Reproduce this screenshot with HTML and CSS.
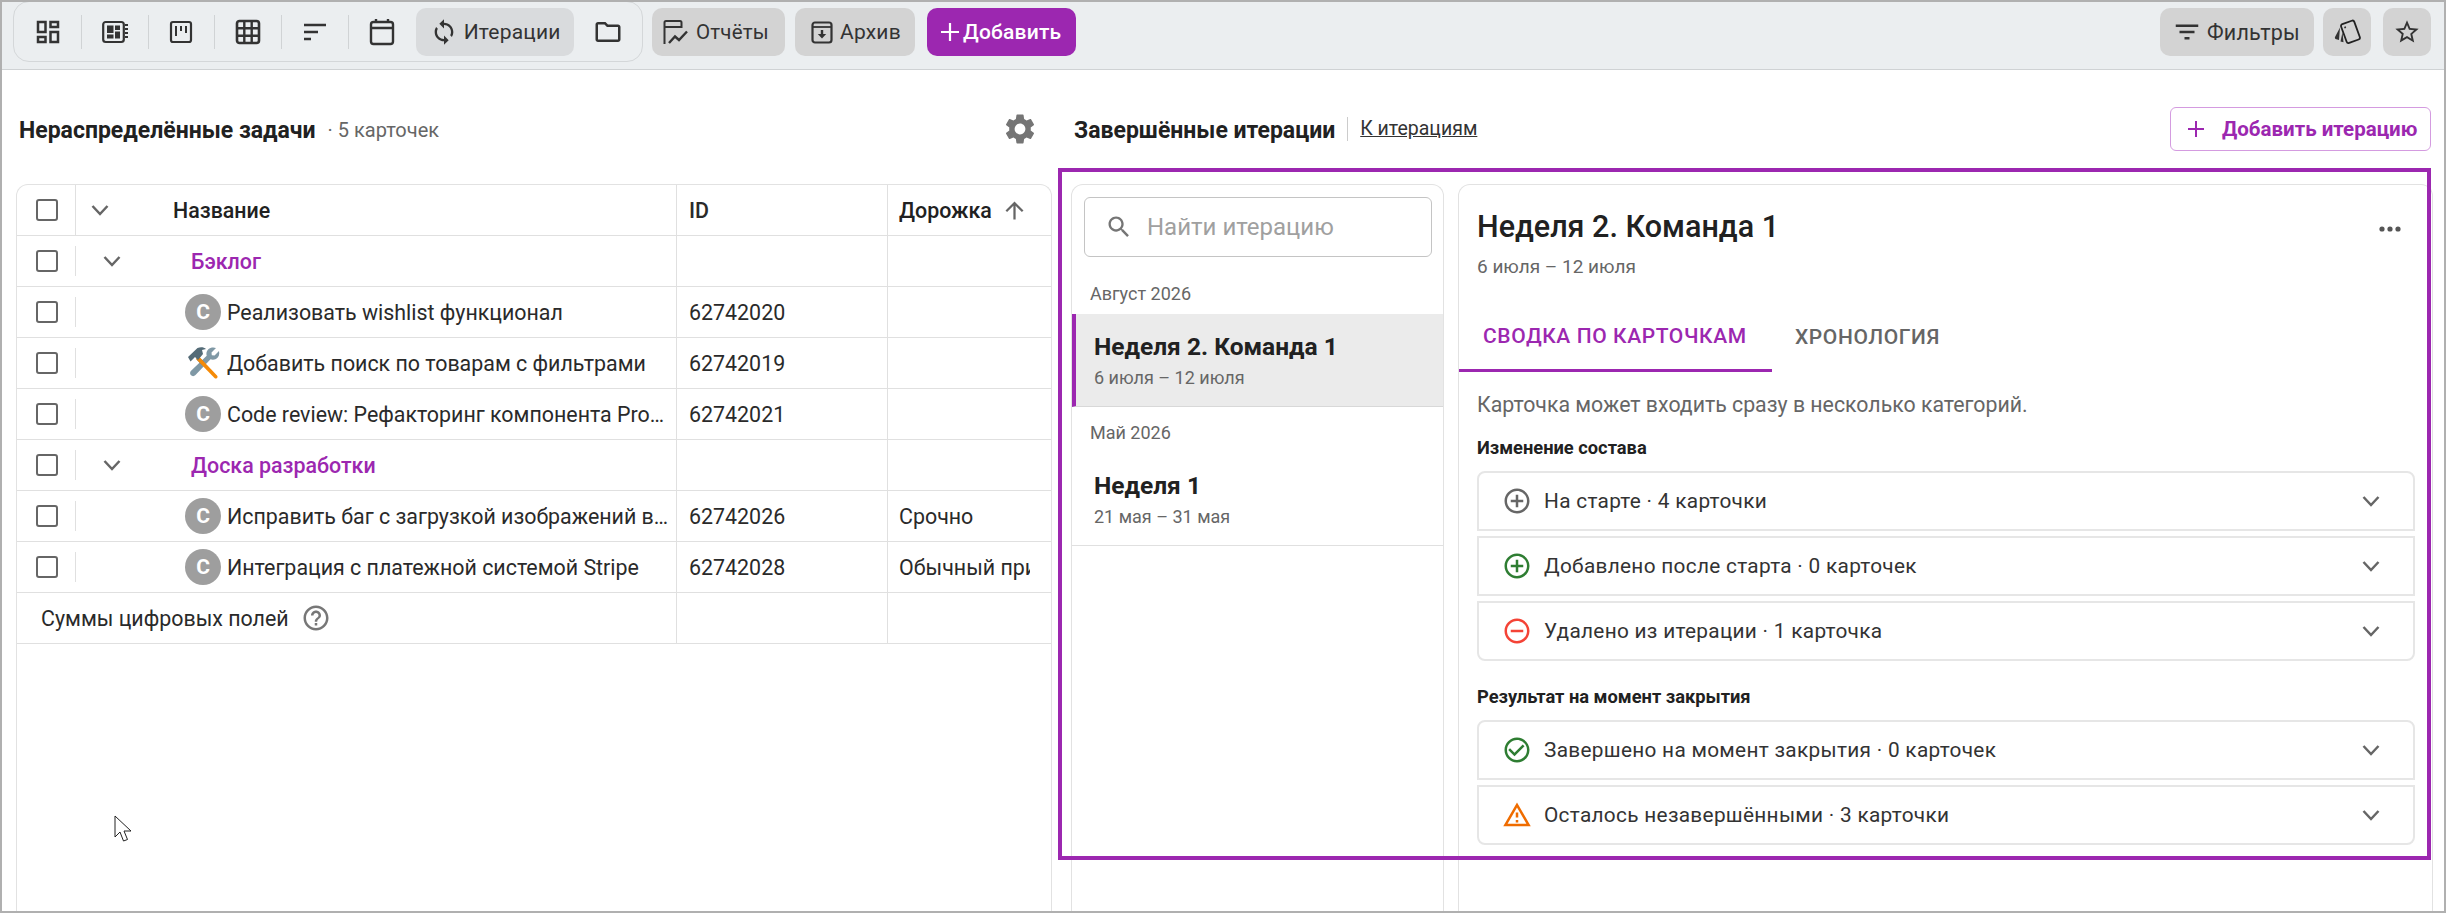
FILE: index.html
```html
<!DOCTYPE html>
<html lang="ru">
<head>
  <meta charset="UTF-8">
  <title>Итерации</title>
  <link rel="stylesheet" href="styles.css">
</head>
<body>
<div class="window">

  <!-- Toolbar -->
  <div class="toolbar">
    <div class="view-group">
      <div class="view-item sep"><svg width="30" height="30" viewBox="0 0 24 24"><path d="M19 5v2h-4V5h4M9 5v6H5V5h4m10 8v6h-4v-6h4M9 17v2H5v-2h4M21 3h-8v6h8V3zM11 3H3v10h8V3zm10 8h-8v10h8V11zm-10 4H3v6h8v-6z"/></svg></div>
      <div class="view-item sep"><svg width="30" height="30" viewBox="0 0 30 30"><rect x="3.2" y="5" width="20.6" height="20" rx="2.5" fill="none" stroke="#333" stroke-width="2.2"/><rect x="7" y="8.5" width="6.5" height="7.5"/><rect x="15" y="8.5" width="5" height="4.5"/><rect x="7" y="17.5" width="6.5" height="4"/><rect x="15" y="14.5" width="5" height="7"/><path d="M25 8h3M25 12h3M25 16h3M25 20h3" stroke="#333" stroke-width="1.8"/></svg></div>
      <div class="view-item sep"><svg width="30" height="30" viewBox="0 0 30 30"><rect x="5" y="5" width="20" height="20" rx="2" fill="none" stroke="#333" stroke-width="2.2"/><path d="M10 9v10M15 9v5M20 9v7" stroke="#333" stroke-width="2"/></svg></div>
      <div class="view-item sep"><svg width="30" height="30" viewBox="0 0 30 30"><rect x="4" y="4" width="22" height="22" rx="2.5" fill="none" stroke="#333" stroke-width="2.6"/><path d="M11.3 4v22M18.7 4v22M4 11.3h22M4 18.7h22" stroke="#333" stroke-width="2.4"/></svg></div>
      <div class="view-item sep"><svg width="30" height="30" viewBox="0 0 30 30"><path d="M4 8h22M4 15h14M4 22h7" stroke="#333" stroke-width="2.4"/></svg></div>
      <div class="view-item"><svg width="30" height="30" viewBox="0 0 30 30"><rect x="4" y="5" width="22" height="22" rx="2.5" fill="none" stroke="#333" stroke-width="2.4"/><path d="M4 11h22M9 2v4M21 2v4" stroke="#333" stroke-width="2.4"/></svg></div>
      <div class="view-active">
        <svg width="28" height="28" viewBox="0 0 24 24"><path d="M12 4V1L8 5l4 4V6c3.31 0 6 2.69 6 6 0 1.01-.25 1.97-.7 2.8l1.46 1.46C19.54 15.03 20 13.57 20 12c0-4.42-3.58-8-8-8zm0 14c-3.31 0-6-2.69-6-6 0-1.01.25-1.97.7-2.8L5.24 7.74C4.46 8.97 4 10.43 4 12c0 4.42 3.58 8 8 8v3l4-4-4-4v3z"/></svg>
        <span>Итерации</span>
      </div>
      <div class="view-folder"><svg width="30" height="30" viewBox="0 0 24 24"><path d="M20 6h-8l-2-2H4c-1.1 0-1.99.9-1.99 2L2 18c0 1.1.9 2 2 2h16c1.1 0 2-.9 2-2V8c0-1.1-.9-2-2-2zm0 12H4V6h5.17l2 2H20v10z"/></svg></div>
    </div>

    <div class="tool-btn btn-reports">
      <svg width="28" height="28" viewBox="0 0 28 28"><g fill="none" stroke="#333" stroke-width="2"><path d="M2.500 26V4.500a1.500 1.500 0 0 1 1.500-1.500h14a1.500 1.500 0 0 1 1.500 1.500V9H2.500"/><path d="M7 25l6-6.500 4 3.500 8-8.500" stroke-width="2.400"/></g></svg>
      <span>Отчёты</span>
    </div>
    <div class="tool-btn btn-archive">
      <svg width="26" height="26" viewBox="0 0 26 26"><rect x="3.500" y="3.500" width="19" height="20" rx="2.500" fill="none" stroke="#333" stroke-width="2.200"/><path d="M3.500 8h19" stroke="#333" stroke-width="1.800"/><path d="M11.800 11h2.400v4h3L13 19.500 8.800 15h3z"/></svg>
      <span>Архив</span>
    </div>
    <div class="tool-btn btn-add">
      <svg width="20" height="20" viewBox="0 0 20 20"><path d="M10 1v18M1 10h18" stroke="#fff" stroke-width="2.200"/></svg>
      <span>Добавить</span>
    </div>

    <div class="toolbar-right">
      <div class="tool-btn btn-filters">
        <svg width="30" height="30" viewBox="0 0 24 24"><path d="M10 18h4v-2h-4v2zM3 6v2h18V6H3zm3 7h12v-2H6v2z"/></svg>
        <span>Фильтры</span>
      </div>
      <div class="tool-btn btn-square">
        <svg width="28" height="28" viewBox="0 0 28 28"><g transform="rotate(-20 17 14)"><rect x="10.500" y="4" width="14" height="20" rx="2" fill="none" stroke="#222" stroke-width="1.800"/><circle cx="14" cy="8" r="1"/></g><path d="M7 9.500L2 19c-.5 1 .3 2 1.300 2.200L6 22z"/><path d="M9.500 14L7.500 23.500l3 .8z"/></svg>
      </div>
      <div class="tool-btn btn-square btn-star">
        <svg width="28" height="28" viewBox="0 0 24 24"><path d="M22 9.240l-7.190-.62L12 2 9.190 8.630 2 9.240l5.460 4.730L5.820 21 12 17.270 18.180 21l-1.630-7.030L22 9.240zM12 15.400l-3.760 2.270 1-4.280-3.320-2.880 4.380-.38L12 6.100l1.710 4.040 4.380.38-3.320 2.880 1 4.280L12 15.400z"/></svg>
      </div>
    </div>
  </div>

  <div class="main">

    <!-- Left column -->
    <div class="col-left">
      <div class="col-head head-left">
        <span class="head-title">Нераспределённые задачи</span>
        <span class="head-count">· 5 карточек</span>
        <svg class="gear" width="36" height="36" viewBox="0 0 24 24"><path d="M19.140 12.940c.04-.3.06-.61.06-.94 0-.32-.02-.64-.07-.94l2.030-1.580c.18-.14.23-.41.12-.61l-1.920-3.320c-.12-.22-.37-.29-.59-.22l-2.390.96c-.5-.38-1.030-.7-1.620-.94l-.36-2.540c-.04-.24-.24-.41-.48-.41h-3.840c-.24 0-.43.17-.47.41l-.36 2.540c-.59.24-1.130.57-1.620.94l-2.390-.96c-.22-.08-.47 0-.59.22L2.740 8.870c-.12.21-.08.47.12.61l2.030 1.580c-.05.3-.09.63-.09.94s.02.64.07.94l-2.030 1.580c-.18.14-.23.41-.12.61l1.920 3.320c.12.22.37.29.59.22l2.390-.96c.5.38 1.030.7 1.620.94l.36 2.540c.05.24.24.41.48.41h3.840c.24 0 .44-.17.47-.41l.36-2.540c.59-.24 1.130-.56 1.620-.94l2.390.96c.22.08.47 0 .59-.22l1.920-3.320c.12-.22.07-.47-.12-.61l-2.010-1.580zM12 15.600c-1.980 0-3.600-1.620-3.600-3.600s1.620-3.600 3.600-3.600 3.600 1.620 3.600 3.600-1.620 3.600-3.600 3.600z"/></svg>
      </div>

      <div class="table-panel">
        <table class="tasks">
          <colgroup><col class="c-check"><col class="c-name"><col class="c-id"><col></colgroup>
          <tr class="row-head">
            <td class="cell-check"><span class="box"></span></td>
            <td><div class="name name-head"><svg class="chev" width="18" height="12" viewBox="0 0 18 12"><path d="M1.500 2L9 10l7.500-8"/></svg><span>Название</span></div></td>
            <td class="cell-id">ID</td>
            <td class="cell-track"><div class="track-head">Дорожка <svg width="27" height="27" viewBox="0 0 24 24"><path d="M4 12l1.410 1.410L11 7.830V20h2V7.830l5.580 5.590L20 12l-8-8-8 8z"/></svg></div></td>
          </tr>
          <tr>
            <td class="cell-check"><span class="box"></span><i class="tick"></i></td>
            <td><div class="name name-group"><svg class="chev" width="18" height="12" viewBox="0 0 18 12"><path d="M1.500 2L9 10l7.500-8"/></svg><span>Бэклог</span></div></td>
            <td></td><td></td>
          </tr>
          <tr>
            <td class="cell-check"><span class="box"></span><i class="tick"></i></td>
            <td><div class="name name-task"><span class="avatar">C</span><span class="task-text">Реализовать wishlist функционал</span></div></td>
            <td class="cell-id">62742020</td><td></td>
          </tr>
          <tr>
            <td class="cell-check"><span class="box"></span><i class="tick"></i></td>
            <td><div class="name name-task">
              <svg class="tools" width="36" height="36" viewBox="0 0 36 36">
                <path d="M31 3l-4.500 4.500.3 2.700 2.700.3L34 6c.8 3.500-.2 6.500-3 8-2 1-4 1-5.500.3L10.500 30c-1.300 1.400-3.200 1.500-4.500.3-1.300-1.300-1.200-3.200.1-4.500L21.700 10.800C21 8.500 21.500 6 23.300 4.300 25.300 2.500 28.300 2 31 3z" fill="#7f98a5"/>
                <path d="M14 12l5 5-2.500 2.500-5-5z" fill="#4f6672"/>
                <path d="M13.500 11L32 30.500c.8.9.7 1.800 0 2.500-.8.700-1.700.7-2.500-.1L11 14z" fill="#f58a07"/>
                <path d="M3 12L12.500 3c3-1.300 6.500-1 8.500 1l-4 1 1 4-5 6-3-3-4.500 4.500z" fill="#546b77"/>
              </svg>
              <span class="task-text">Добавить поиск по товарам с фильтрами</span></div></td>
            <td class="cell-id">62742019</td><td></td>
          </tr>
          <tr>
            <td class="cell-check"><span class="box"></span><i class="tick"></i></td>
            <td><div class="name name-task"><span class="avatar">C</span><span class="task-text">Code review: Рефакторинг компонента ProductCard</span></div></td>
            <td class="cell-id">62742021</td><td></td>
          </tr>
          <tr>
            <td class="cell-check"><span class="box"></span><i class="tick"></i></td>
            <td><div class="name name-group"><svg class="chev" width="18" height="12" viewBox="0 0 18 12"><path d="M1.500 2L9 10l7.500-8"/></svg><span>Доска разработки</span></div></td>
            <td></td><td></td>
          </tr>
          <tr>
            <td class="cell-check"><span class="box"></span><i class="tick"></i></td>
            <td><div class="name name-task"><span class="avatar">C</span><span class="task-text">Исправить баг с загрузкой изображений в каталоге</span></div></td>
            <td class="cell-id">62742026</td><td class="cell-track"><div class="track-text">Срочно</div></td>
          </tr>
          <tr>
            <td class="cell-check"><span class="box"></span><i class="tick"></i></td>
            <td><div class="name name-task"><span class="avatar">C</span><span class="task-text">Интеграция с платежной системой Stripe</span></div></td>
            <td class="cell-id">62742028</td><td class="cell-track"><div class="track-text">Обычный приоритет</div></td>
          </tr>
          <tr>
            <td colspan="2"><div class="sum">Суммы цифровых полей <svg width="30" height="30" viewBox="0 0 24 24"><path d="M11 18h2v-2h-2v2zm1-16C6.480 2 2 6.480 2 12s4.480 10 10 10 10-4.480 10-10S17.520 2 12 2zm0 18c-4.410 0-8-3.590-8-8s3.590-8 8-8 8 3.590 8 8-3.590 8-8 8zm0-14c-2.210 0-4 1.790-4 4h2c0-1.100.9-2 2-2s2 .9 2 2c0 2-3 1.750-3 5h2c0-2.250 3-2.500 3-5 0-2.210-1.790-4-4-4z"/></svg></div></td>
            <td></td><td></td>
          </tr>
        </table>
        <svg class="cursor" width="20" height="30" viewBox="0 0 20 30"><path d="M1 1v21l5-5 3.500 9 4-1.500-3.500-8.500h7z" fill="#fff" stroke="#222" stroke-width="1"/></svg>
      </div>
    </div>

    <!-- Right column -->
    <div class="col-right">
      <div class="col-head head-right">
        <span class="head-title">Завершённые итерации</span>
        <a class="head-link">К итерациям</a>
        <div class="add-iter">
          <svg width="18" height="18" viewBox="0 0 18 18"><path d="M9 1v16M1 9h16" stroke="#9c27b0" stroke-width="2"/></svg>
          <span>Добавить итерацию</span>
        </div>
      </div>

      <div class="panels">
        <div class="list">
          <div class="search">
            <svg width="28" height="28" viewBox="0 0 24 24"><path d="M15.500 14h-.79l-.28-.27C15.410 12.590 16 11.110 16 9.500 16 5.910 13.090 3 9.500 3S3 5.910 3 9.500 5.910 16 9.500 16c1.610 0 3.090-.59 4.230-1.570l.27.28v.79l5 4.990L20.490 19l-4.990-5zm-6 0C7.010 14 5 11.990 5 9.500S7.010 5 9.500 5 14 7.010 14 9.500 11.990 14 9.500 14z"/></svg>
            <span>Найти итерацию</span>
          </div>
          <div class="month month-first">Август 2026</div>
          <div class="iter iter-active">
            <div class="iter-title">Неделя 2. Команда 1</div>
            <div class="iter-date">6 июля – 12 июля</div>
          </div>
          <div class="month">Май 2026</div>
          <div class="iter">
            <div class="iter-title">Неделя 1</div>
            <div class="iter-date">21 мая – 31 мая</div>
          </div>
        </div>

        <div class="detail">
          <div class="detail-head">
            <div class="detail-title">Неделя 2. Команда 1</div>
            <div class="detail-date">6 июля – 12 июля</div>
            <svg class="dots" width="24" height="8" viewBox="0 0 24 8"><circle cx="4" cy="4" r="2.600"/><circle cx="12" cy="4" r="2.600"/><circle cx="20" cy="4" r="2.600"/></svg>
          </div>
          <div class="tabs">
            <div class="tab tab-active">Сводка по карточкам</div>
            <div class="tab">Хронология</div>
          </div>
          <div class="detail-body">
            <div class="hint">Карточка может входить сразу в несколько категорий.</div>

            <div class="group-title">Изменение состава</div>
            <div class="cards">
              <div class="card">
                <svg class="c-gray" width="30" height="30" viewBox="0 0 24 24"><path d="M13 7h-2v4H7v2h4v4h2v-4h4v-2h-4V7zm-1-5C6.480 2 2 6.480 2 12s4.480 10 10 10 10-4.480 10-10S17.520 2 12 2zm0 18c-4.410 0-8-3.590-8-8s3.590-8 8-8 8 3.590 8 8-3.590 8-8 8z"/></svg>
                <span>На старте · 4 карточки</span>
                <svg class="chev" width="18" height="12" viewBox="0 0 18 12"><path d="M1.500 2L9 10l7.500-8"/></svg>
              </div>
              <div class="card">
                <svg class="c-green" width="30" height="30" viewBox="0 0 24 24"><path d="M13 7h-2v4H7v2h4v4h2v-4h4v-2h-4V7zm-1-5C6.480 2 2 6.480 2 12s4.480 10 10 10 10-4.480 10-10S17.520 2 12 2zm0 18c-4.410 0-8-3.590-8-8s3.590-8 8-8 8 3.590 8 8-3.590 8-8 8z"/></svg>
                <span>Добавлено после старта · 0 карточек</span>
                <svg class="chev" width="18" height="12" viewBox="0 0 18 12"><path d="M1.500 2L9 10l7.500-8"/></svg>
              </div>
              <div class="card">
                <svg class="c-red" width="30" height="30" viewBox="0 0 24 24"><path d="M7 11v2h10v-2H7zm5-9C6.480 2 2 6.480 2 12s4.480 10 10 10 10-4.480 10-10S17.520 2 12 2zm0 18c-4.410 0-8-3.590-8-8s3.590-8 8-8 8 3.590 8 8-3.590 8-8 8z"/></svg>
                <span>Удалено из итерации · 1 карточка</span>
                <svg class="chev" width="18" height="12" viewBox="0 0 18 12"><path d="M1.500 2L9 10l7.500-8"/></svg>
              </div>
            </div>

            <div class="group-title group-second">Результат на момент закрытия</div>
            <div class="cards">
              <div class="card">
                <svg class="c-green" width="30" height="30" viewBox="0 0 24 24"><path d="M16.590 7.580L10 14.170l-3.590-3.580L5 12l5 5 8-8zM12 2C6.480 2 2 6.480 2 12s4.480 10 10 10 10-4.480 10-10S17.520 2 12 2zm0 18c-4.420 0-8-3.580-8-8s3.580-8 8-8 8 3.580 8 8-3.580 8-8 8z"/></svg>
                <span>Завершено на момент закрытия · 0 карточек</span>
                <svg class="chev" width="18" height="12" viewBox="0 0 18 12"><path d="M1.500 2L9 10l7.500-8"/></svg>
              </div>
              <div class="card">
                <svg class="c-orange" width="30" height="30" viewBox="0 0 24 24"><path d="M12 5.990L19.530 19H4.470L12 5.990M12 2L1 21h22L12 2zm1 14h-2v2h2v-2zm0-6h-2v4h2v-4z"/></svg>
                <span>Осталось незавершёнными · 3 карточки</span>
                <svg class="chev" width="18" height="12" viewBox="0 0 18 12"><path d="M1.500 2L9 10l7.500-8"/></svg>
              </div>
            </div>
          </div>
        </div>
      </div>

      <div class="frame"></div>
    </div>
  </div>
</div>
</body>
</html>
```

FILE: styles.css
```css
* {
  box-sizing: border-box;
}
body {
  margin: 0;
  font-family: 'Roboto', sans-serif;
  color: #222222;
  background-color: #ffffff;
}
.window {
  height: 913px;
  border: 2px solid #b0b0b0;
  display: flex;
  flex-direction: column;
  overflow: hidden;
}

/* toolbar */
.toolbar {
  height: 68px;
  flex: none;
  display: flex;
  align-items: flex-start;
  padding-left: 11px;
  background-color: #ebeef0;
  border-bottom: 1px solid #cfd2d4;
}
.view-group {
  width: 630px;
  height: 61px;
  margin-top: -1px;
  display: flex;
  align-items: center;
  padding-left: 1px;
  border: 1px solid #d4d7d9;
  border-radius: 16px;
}
.view-item {
  width: 67px;
  height: 34px;
  display: flex;
  align-items: center;
  justify-content: center;
}
.view-item svg, .view-folder svg, .view-active svg, .tool-btn svg {
  fill: #333333;
  flex: none;
}
.view-item.sep {
  border-right: 1px solid #d0d3d5;
}
.view-active {
  width: 159px;
  height: 48px;
  display: flex;
  align-items: center;
  gap: 6px;
  padding-left: 14px;
  background-color: #d9dbdd;
  border-radius: 10px;
  font-size: 21px;
  color: #333333;
  letter-spacing: 0.2px;
}
.view-folder {
  width: 68px;
  display: flex;
  justify-content: center;
}
.tool-btn {
  height: 48px;
  margin-top: 6px;
  display: flex;
  align-items: center;
  background-color: #d3d3d3;
  border-radius: 10px;
  font-size: 21px;
  color: #333333;
  letter-spacing: 0.2px;
}
.btn-reports {
  width: 133px;
  margin-left: 9px;
  padding-left: 10px;
  gap: 6px;
  font-size: 20.5px;
}
.btn-archive {
  width: 120px;
  margin-left: 10px;
  padding-left: 14px;
  gap: 5px;
}
.btn-add {
  width: 149px;
  margin-left: 12px;
  padding-left: 13px;
  gap: 3px;
  background-color: #9c27b0;
  color: #ffffff;
  font-weight: 500;
}
.toolbar-right {
  margin-left: auto;
  display: flex;
  padding-right: 13px;
}
.btn-filters {
  width: 154px;
  padding-left: 12px;
  gap: 5px;
  font-size: 21.5px;
}
.btn-square {
  width: 48px;
  margin-left: 9px;
  justify-content: center;
}
.btn-star {
  margin-left: 12px;
}

/* columns */
.main {
  flex: 1;
  min-height: 0;
  display: flex;
  gap: 19px;
  padding-left: 14px;
}
.col-left {
  width: 1036px;
  display: flex;
  flex-direction: column;
}
.col-right {
  position: relative;
  width: 1362px;
  display: flex;
  flex-direction: column;
}
.col-head {
  height: 44px;
  flex: none;
  margin: 37px 0 33px;
  display: flex;
  align-items: center;
}
.head-left {
  padding: 0 14px 0 3px;
}
.head-right {
  padding: 0 2px 0 3px;
}
.head-title {
  padding-top: 2px;
  font-size: 23px;
  font-weight: 700;
  color: #212121;
}
.head-count {
  margin-left: 12px;
  padding-top: 2px;
  font-size: 20px;
  color: #666666;
}
.gear {
  margin-left: auto;
  fill: #757575;
}
.head-link {
  margin-left: 12px;
  padding-left: 12px;
  border-left: 1px solid #cccccc;
  font-size: 19.5px;
  line-height: 24px;
  color: #333333;
  text-decoration: underline;
}
.add-iter {
  margin-left: auto;
  width: 261px;
  height: 44px;
  display: flex;
  align-items: center;
  gap: 17px;
  padding-left: 16px;
  border: 1px solid #d49be0;
  border-radius: 6px;
  font-size: 20.5px;
  font-weight: 700;
  color: #9c27b0;
}

/* table */
.table-panel {
  position: relative;
  flex: 1;
  border: 1px solid #e2e2e2;
  border-bottom: none;
  border-radius: 12px 12px 0 0;
}
.tasks {
  width: 100%;
  table-layout: fixed;
  border-collapse: separate;
  border-spacing: 0;
  font-size: 21.4px;
  color: #2a2a2a;
}
.c-check { width: 59px; }
.c-name { width: 601px; }
.c-id { width: 211px; }
.tasks td {
  height: 51px;
  padding: 0;
  border-bottom: 1px solid #e0e0e0;
  border-right: 1px solid #e0e0e0;
  white-space: nowrap;
}
.tasks td:last-child {
  border-right: none;
}
.tasks .cell-check {
  position: relative;
  border-right: none;
}
.row-head .cell-check {
  border-right: 1px solid #e0e0e0;
}
.box {
  display: block;
  width: 22px;
  height: 22px;
  margin-left: 19px;
  border: 2.5px solid #666666;
  border-radius: 3px;
}
.tick {
  position: absolute;
  right: 0;
  top: 10px;
  bottom: 10px;
  border-right: 1px solid #e0e0e0;
}
.name {
  display: flex;
  align-items: center;
  overflow: hidden;
}
.chev {
  flex: none;
  fill: none;
  stroke: #666666;
  stroke-width: 2.5;
}
.name-head {
  padding-left: 15px;
  gap: 64px;
  font-weight: 500;
  color: #212121;
}
.name-group {
  padding-left: 27px;
  gap: 70px;
  color: #9c27b0;
  font-weight: 500;
}
.name-task {
  padding: 0 5px 0 109px;
  gap: 6px;
}
.avatar {
  width: 36px;
  height: 36px;
  flex: none;
  display: flex;
  align-items: center;
  justify-content: center;
  background-color: #9e9e9e;
  border-radius: 50%;
  color: #ffffff;
  font-size: 21px;
  font-weight: 700;
}
.tools {
  flex: none;
}
.task-text {
  overflow: hidden;
  text-overflow: ellipsis;
}
.cell-id {
  padding-left: 12px !important;
}
.row-head .cell-id {
  font-weight: 500;
}
.cell-track {
  padding-left: 11px !important;
}
.track-head {
  display: flex;
  align-items: center;
  gap: 9px;
  font-weight: 500;
  color: #212121;
}
.track-head svg {
  fill: #666666;
}
.track-text {
  width: 131px;
  overflow: hidden;
}
.sum {
  display: flex;
  align-items: center;
  gap: 12px;
  padding-left: 24px;
}
.sum svg {
  fill: #777777;
}
.cursor {
  position: absolute;
  left: 97px;
  top: 630px;
}

/* iterations */
.panels {
  flex: 1;
  min-height: 0;
  display: flex;
  gap: 14px;
}
.list {
  width: 373px;
  flex: none;
  border: 1px solid #e2e2e2;
  border-bottom: none;
  border-radius: 12px 12px 0 0;
}
.search {
  height: 60px;
  margin: 12px 11px 0 12px;
  display: flex;
  align-items: center;
  gap: 14px;
  padding-left: 20px;
  border: 1px solid #c4c4c4;
  border-radius: 6px;
  font-size: 24px;
  color: #a0a0a0;
}
.search svg {
  fill: #757575;
}
.month {
  padding: 14px 0 8px 18px;
  font-size: 18px;
  line-height: 24px;
  color: #666666;
}
.month-first {
  margin-top: 11px;
}
.iter {
  height: 93px;
  padding: 18px 0 0 22px;
  border-bottom: 1px solid #e0e0e0;
}
.iter-active {
  padding-left: 18px;
  background-color: #ebebeb;
  border-left: 4px solid #9c27b0;
  border-bottom-color: #d8d8d8;
}
.iter-title {
  font-size: 24.5px;
  font-weight: 700;
  line-height: 30px;
  color: #212121;
}
.iter-date {
  margin-top: 4px;
  font-size: 18px;
  line-height: 24px;
  color: #666666;
}
.detail {
  flex: 1;
  min-width: 0;
  border: 1px solid #e2e2e2;
  border-bottom: none;
  border-radius: 12px 12px 0 0;
}
.detail-head {
  position: relative;
  padding: 24px 0 0 18px;
}
.detail-title {
  font-size: 30.5px;
  font-weight: 500;
  line-height: 36px;
  color: #212121;
}
.detail-date {
  margin-top: 10px;
  font-size: 19px;
  line-height: 24px;
  color: #666666;
}
.dots {
  position: absolute;
  top: 40px;
  right: 30px;
  fill: #555555;
}
.tabs {
  margin-top: 21px;
  height: 72px;
  display: flex;
}
.tab {
  height: 72px;
  display: flex;
  align-items: center;
  padding: 2px 23px 0;
  font-size: 21px;
  font-weight: 500;
  letter-spacing: 0.6px;
  text-transform: uppercase;
  color: #666666;
}
.tab-active {
  width: 313px;
  padding-left: 24px;
  color: #9c27b0;
  border-bottom: 3px solid #9c27b0;
}
.detail-body {
  padding: 20px 17px 0 18px;
}
.hint {
  font-size: 21.3px;
  line-height: 26px;
  color: #666666;
}
.group-title {
  margin-top: 18px;
  font-size: 18.3px;
  font-weight: 700;
  line-height: 24px;
  color: #212121;
}
.group-second {
  margin-top: 24px;
}
.cards {
  margin-top: 11px;
  display: flex;
  flex-direction: column;
  gap: 5px;
}
.card {
  height: 60px;
  display: flex;
  align-items: center;
  gap: 12px;
  padding: 0 33px 0 23px;
  border: 2px solid #e6e6e6;
  font-size: 20.8px;
  letter-spacing: 0.3px;
  color: #333333;
}
.card:first-child {
  border-top-left-radius: 8px;
  border-top-right-radius: 8px;
}
.card:last-child {
  border-bottom-left-radius: 8px;
  border-bottom-right-radius: 8px;
}
.card .chev {
  margin-left: auto;
}
.c-gray { fill: #666666; }
.c-green { fill: #2e7d32; }
.c-red { fill: #f44336; }
.c-orange { fill: #ef6c00; }

/* highlight frame around the iterations block */
.frame {
  position: absolute;
  left: -13px;
  top: 98px;
  width: 1373px;
  height: 692px;
  border: 4px solid #9c27b0;
  pointer-events: none;
}
```
